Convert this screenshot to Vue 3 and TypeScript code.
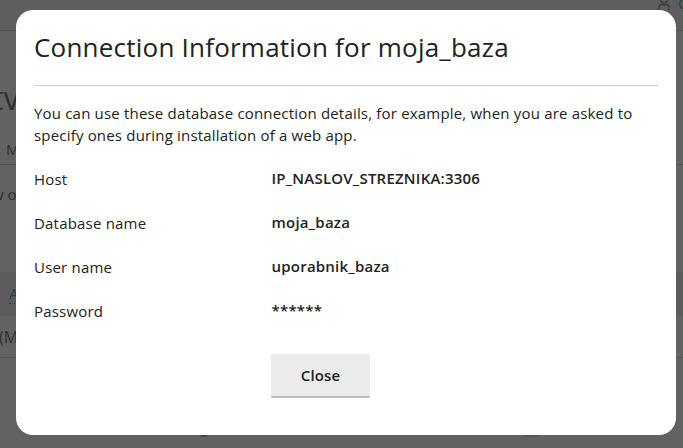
<script setup lang="ts">
interface Detail {
  label: string
  value: string
}

const database = 'moja_baza'
const details: Detail[] = [
  { label: 'Host', value: 'IP_NASLOV_STREZNIKA:3306' },
  { label: 'Database name', value: database },
  { label: 'User name', value: 'uporabnik_baza' },
  { label: 'Password', value: '******' },
]
</script>

<template>
  <div class="screen">
    <div class="page" aria-hidden="true">
      <header class="topbar">
        <svg class="user-icon" width="12" height="14" viewBox="0 0 12 14">
          <circle cx="6" cy="4" r="3.2" />
          <path d="M1 14V10.7Q1 8.6 3 8.6H4.2Q6 9.8 7.8 8.6H9Q11 8.6 11 10.7V14" />
        </svg>
        <span class="account">C</span>
      </header>
      <div class="heading">tv</div>
      <div class="tabs">M</div>
      <div class="note">w o</div>
      <div class="table-head"><span class="sort">A</span></div>
      <div class="table-row">(M</div>
      <footer class="marks"><i class="mark"></i><i class="mark wide"></i></footer>
    </div>
    <div class="overlay">
      <section class="dialog" role="dialog">
        <h1 class="title">Connection Information for {{ database }}</h1>
        <p class="intro">You can use these database connection details, for example, when you are asked to specify ones during installation of a web app.</p>
        <dl class="details">
          <div v-for="item in details" :key="item.label" class="row">
            <dt>{{ item.label }}</dt>
            <dd>{{ item.value }}</dd>
          </div>
        </dl>
        <button class="close" type="button">Close</button>
      </section>
    </div>
  </div>
</template>

<style>
body {
  margin: 0;
  overflow: hidden;
}
</style>

<style scoped>
.screen {
  position: relative;
  width: 683px;
  height: 448px;
  overflow: hidden;
  font-family: "Open Sans", sans-serif;
  color: #222;
}
.page {
  display: flex;
  flex-direction: column;
  height: 448px;
  background: #626262;
  color: #303030;
  white-space: nowrap;
}
.page > * {
  box-sizing: border-box;
  flex: none;
}
.topbar {
  display: flex;
  justify-content: flex-end;
  gap: 8px;
  height: 31px;
  background: #5e5e5e;
  border-bottom: 1px solid #545454;
}
.user-icon {
  margin-top: -4px;
  fill: none;
  stroke: #3c3c3c;
  stroke-width: 1.3;
}
.account {
  width: 5px;
  margin-top: -7px;
  color: #1d4553;
  font-size: 15px;
}
.heading {
  height: 104px;
  padding-top: 47px;
  font-size: 32px;
  line-height: 40px;
  margin-left: -8px;
}
.tabs {
  height: 30px;
  padding: 4px 0 0 6px;
  border-bottom: 1px solid #565656;
  font-size: 15px;
  line-height: 20px;
}
.note {
  height: 107px;
  padding-top: 19px;
  margin-left: -8px;
  font-size: 15px;
  line-height: 20px;
}
.table-head {
  height: 44px;
  padding: 11px 0 0 9px;
  background: #5c5c5c;
}
.sort {
  display: block;
  width: 10px;
  height: 20px;
  border-bottom: 1px dotted #1d4553;
  color: #1d4553;
  font-size: 15px;
  line-height: 20px;
}
.table-row {
  height: 42px;
  padding-top: 10px;
  border-bottom: 1px solid #595959;
  font-size: 16px;
  line-height: 22px;
  margin-left: -1px;
}
.marks {
  display: flex;
  gap: 319px;
  padding: 77px 0 0 200px;
}
.mark {
  width: 7px;
  height: 2px;
  border-radius: 0 0 4px 4px;
  background: #38474a;
}
.mark.wide {
  width: 17px;
  background: #4c575a;
  margin-left: -4px;
}
.overlay {
  position: absolute;
  inset: 0;
  padding: 10px 7px 13px 16px;
}
.dialog {
  box-sizing: border-box;
  height: 425px;
  padding: 18px;
  border-radius: 17px;
  background: #fff;
}
.title {
  margin: 0 0 16px;
  padding-bottom: 18px;
  border-bottom: 1px solid #cfcfcf;
  font-size: 26px;
  font-weight: 400;
  line-height: 39px;
  letter-spacing: 0.22px;
  white-space: nowrap;
}
.intro {
  margin: 0 0 21px;
  font-size: 15px;
  line-height: 22px;
  letter-spacing: 0.185px;
}
.details {
  margin: 0;
}
.row {
  display: grid;
  grid-template-columns: 237px 1fr;
  height: 44px;
  font-size: 15px;
  line-height: 22px;
}
dt {
  padding-top: 1px;
  letter-spacing: 0.2px;
}
dd {
  margin: 0 0 0 0.5px;
  font-weight: 600;
  letter-spacing: 0.22px;
}
.close {
  display: block;
  box-sizing: border-box;
  width: 99px;
  height: 44px;
  margin: 11px 0 0 237px;
  padding: 0;
  border: 0;
  border-bottom: 2px solid #bcbcbc;
  border-radius: 2px;
  background: #ebebeb;
  color: #222;
  font: 600 15px/22px "Open Sans", sans-serif;
  letter-spacing: 0.1px;
}
</style>
